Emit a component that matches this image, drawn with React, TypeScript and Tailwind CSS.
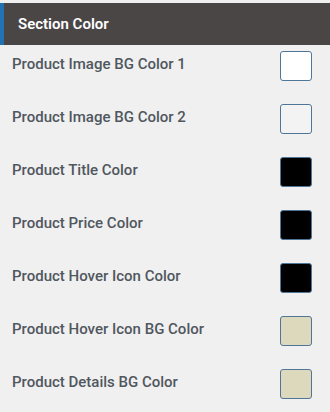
const rows = [
  { label: "Product Image BG Color 1", color: "bg-white" },
  { label: "Product Image BG Color 2", color: "bg-[#f3f3f3]" },
  { label: "Product Title Color", color: "bg-black" },
  { label: "Product Price Color", color: "bg-black" },
  { label: "Product Hover Icon Color", color: "bg-black" },
  { label: "Product Hover Icon BG Color", color: "bg-[#dcd9bc]" },
  { label: "Product Details BG Color", color: "bg-[#dcd9bc]" },
];

const App = () => {
  return (
    <div className="w-[330px] h-[412px] bg-[#f0f0f1] pt-[3px] overflow-hidden" style={{ fontFamily: "Roboto, 'Liberation Sans', sans-serif" }}>
      <div className="h-[42px] bg-[#4b4646] border-l-4 border-[#2271b1] flex items-center pl-[14px]">
        <span className="text-white text-[15px] font-semibold">Section Color</span>
      </div>
      <div className="flex flex-col gap-[23px] pt-[6px] pl-[12px] pr-[18px]">
        {rows.map((row) => (
          <div key={row.label} className="flex items-center justify-between h-[30px]">
            <span className="text-[15px] font-medium text-[#50575e] pb-[3px]">{row.label}</span>
            <div className={`w-[32px] h-[30px] rounded-[3px] border border-[#4f7597] ${row.color}`} />
          </div>
        ))}
      </div>
    </div>
  );
};

export default App;
